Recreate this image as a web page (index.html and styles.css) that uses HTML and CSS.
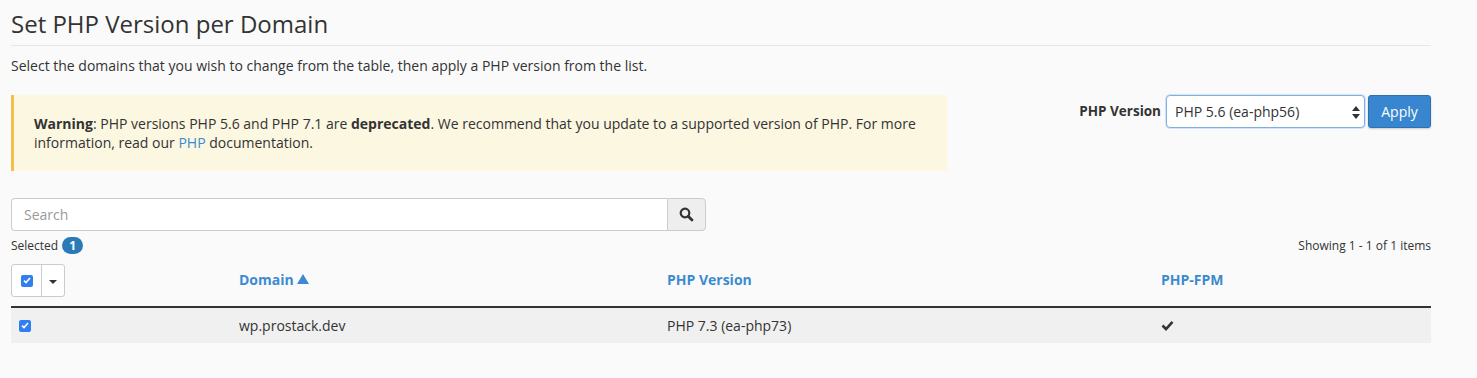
FILE: index.html
```html
<!DOCTYPE html>
<html>
<head>
<meta charset="utf-8">
<link rel="stylesheet" href="styles.css">
</head>
<body>
<div class="page">
  <h1 class="title">Set PHP Version per Domain</h1>
  <p class="desc">Select the domains that you wish to change from the table, then apply a PHP version from the list.</p>
  <div class="top-row">
    <div class="warning">
      <strong>Warning</strong>: PHP versions PHP 5.6 and PHP 7.1 are <strong>deprecated</strong>. We recommend that you update to a supported version of PHP. For more information, read our <a href="#" class="link">PHP</a> documentation.
    </div>
    <div class="controls">
      <label class="ctl-label">PHP Version</label>
      <div class="select">
        <span>PHP 5.6 (ea-php56)</span>
        <svg class="updown" width="8" height="13" viewBox="0 0 8 13"><path d="M4 0 L8 5 L0 5 Z M4 13 L8 8 L0 8 Z" fill="#333"/></svg>
      </div>
      <button class="apply">Apply</button>
    </div>
  </div>
  <div class="search">
    <div class="search-input">Search</div>
    <div class="search-btn">
      <svg width="15" height="15" viewBox="0 0 15 15"><circle cx="6" cy="6" r="4.3" fill="none" stroke="#333" stroke-width="2.2"/><path d="M9.2 9.2 L13 13" stroke="#333" stroke-width="2.8" stroke-linecap="round"/></svg>
    </div>
  </div>
  <div class="meta">
    <div class="selected">Selected <span class="badge">1</span></div>
    <div class="showing">Showing 1 - 1 of 1 items</div>
  </div>
  <div class="table">
    <div class="thead">
      <div class="cell">
        <div class="cb-group">
          <div class="cb-part"><span class="cb"><svg width="8" height="7" viewBox="0 0 8 7"><path d="M1 3.6 L3 5.6 L7 1" fill="none" stroke="#fff" stroke-width="1.6"/></svg></span></div>
          <div class="caret-part"><span class="caret"></span></div>
        </div>
      </div>
      <div class="cell th">Domain <svg class="sort" width="12" height="10" viewBox="0 0 12 10"><path d="M6 0 L12 10 L0 10 Z" fill="#3b8bd0"/></svg></div>
      <div class="cell th">PHP Version</div>
      <div class="cell th">PHP-FPM</div>
    </div>
    <div class="trow">
      <div class="cell"><span class="cb row-cb"><svg width="8" height="7" viewBox="0 0 8 7"><path d="M1 3.6 L3 5.6 L7 1" fill="none" stroke="#fff" stroke-width="1.6"/></svg></span></div>
      <div class="cell">wp.prostack.dev</div>
      <div class="cell">PHP 7.3 (ea-php73)</div>
      <div class="cell"><svg class="tick" width="13" height="11" viewBox="0 0 13 11"><path d="M1.5 5.5 L5 9 L11.5 1.8" fill="none" stroke="#333" stroke-width="2.6"/></svg></div>
    </div>
  </div>
</div>
</body>
</html>
```

FILE: styles.css
```css
* { box-sizing: border-box; }
html, body { margin: 0; padding: 0; }
body {
  background: #fafafa;
  font-family: "Open Sans", "Liberation Sans", sans-serif;
  font-size: 14px;
  color: #333;
}
.page {
  width: 1420px;
  margin-left: 11px;
}
.title {
  margin: 0;
  padding-top: 7px;
  font-size: 24px;
  font-weight: 400;
  line-height: 33px;
  height: 46px;
  border-bottom: 1px solid #e6e6e6;
  color: #333;
}
.desc {
  margin: 0;
  padding-top: 11px;
  line-height: 18px;
  height: 49px;
}
.top-row {
  display: flex;
  justify-content: space-between;
  align-items: flex-start;
}
.warning {
  width: 936px;
  height: 76px;
  background: #fcf7e1;
  border-left: 3px solid #f0c04a;
  padding: 19px 20px 0 20px;
  line-height: 19px;
}
.warning strong { font-weight: 700; }
.link { color: #3b8bd0; text-decoration: none; }
.controls {
  display: flex;
  align-items: center;
}
.ctl-label {
  font-weight: 700;
  font-size: 13.5px;
  margin-right: 5px;
  margin-top: -2px;
}
.select {
  width: 199px;
  height: 33px;
  background: #fff;
  border: 1px solid #7fb0e0;
  border-radius: 4px;
  display: flex;
  align-items: center;
  justify-content: space-between;
  padding: 0 4px 0 8px;
  font-size: 14px;
  box-shadow: 0 0 0 1px rgba(102,160,220,0.25);
}
.updown { margin-top: 1px; }
.apply {
  margin-left: 3px;
  width: 63px;
  height: 33px;
  background: #3886cf;
  border: 1px solid #2f70ae;
  border-radius: 3px;
  color: #fff;
  font-family: "Open Sans", "Liberation Sans", sans-serif;
  font-size: 14px;
  padding: 0;
  box-shadow: 0 1px 2px rgba(0,0,0,0.2);
}
.search {
  display: flex;
  margin-top: 27px;
  width: 695px;
  height: 33px;
}
.search-input {
  flex: 1;
  background: #fff;
  border: 1px solid #ccc;
  border-right: none;
  border-radius: 4px 0 0 4px;
  color: #999;
  font-size: 14px;
  padding: 0 12px;
  line-height: 31px;
}
.search-btn {
  width: 39px;
  background: #eee;
  border: 1px solid #ccc;
  border-radius: 0 4px 4px 0;
  display: flex;
  align-items: center;
  justify-content: center;
}
.meta {
  display: flex;
  justify-content: space-between;
  align-items: center;
  height: 28px;
  font-size: 12px;
}
.selected { display: flex; align-items: center; }
.badge {
  display: inline-block;
  margin-left: 4px;
  min-width: 21px;
  height: 17px;
  line-height: 17px;
  border-radius: 9px;
  background: #2a7ab8;
  color: #fff;
  font-weight: 700;
  text-align: center;
  font-size: 12px;
}
.table { width: 1420px; }
.thead, .trow {
  display: grid;
  grid-template-columns: 220px 428px 494px 278px;
}
.thead {
  padding-top: 5px;
  padding-bottom: 9px;
  border-bottom: 2px solid #333;
  align-items: center;
}
.cell { padding: 0 8px; }
.thead .cell:first-child { padding: 0; }
.th {
  color: #3b8bd0;
  font-weight: 700;
  margin-top: -2px;
  display: flex;
  align-items: center;
}
.sort { margin-left: 3px; margin-top: -1px; }
.cb-group {
  display: flex;
  width: 54px;
  height: 33px;
  border: 1px solid #ccc;
  border-radius: 3px;
  background: #fff;
}
.cb-part {
  width: 30px;
  border-right: 1px solid #ccc;
  display: flex;
  align-items: center;
  justify-content: center;
}
.caret-part {
  flex: 1;
  display: flex;
  align-items: center;
  justify-content: center;
}
.caret {
  width: 0;
  height: 0;
  border-left: 4px solid transparent;
  border-right: 4px solid transparent;
  border-top: 4px solid #333;
  margin-top: 2px;
}
.cb {
  width: 12px;
  height: 12px;
  border-radius: 2px;
  background: #2f7ff2;
  display: inline-flex;
  align-items: center;
  justify-content: center;
}
.trow {
  background: #f0f0f0;
  height: 35px;
  align-items: center;
}
.trow .cell { margin-top: 0; }
.trow .cell:first-child { display: flex; align-items: center; }
.tick { display: block; }
```
